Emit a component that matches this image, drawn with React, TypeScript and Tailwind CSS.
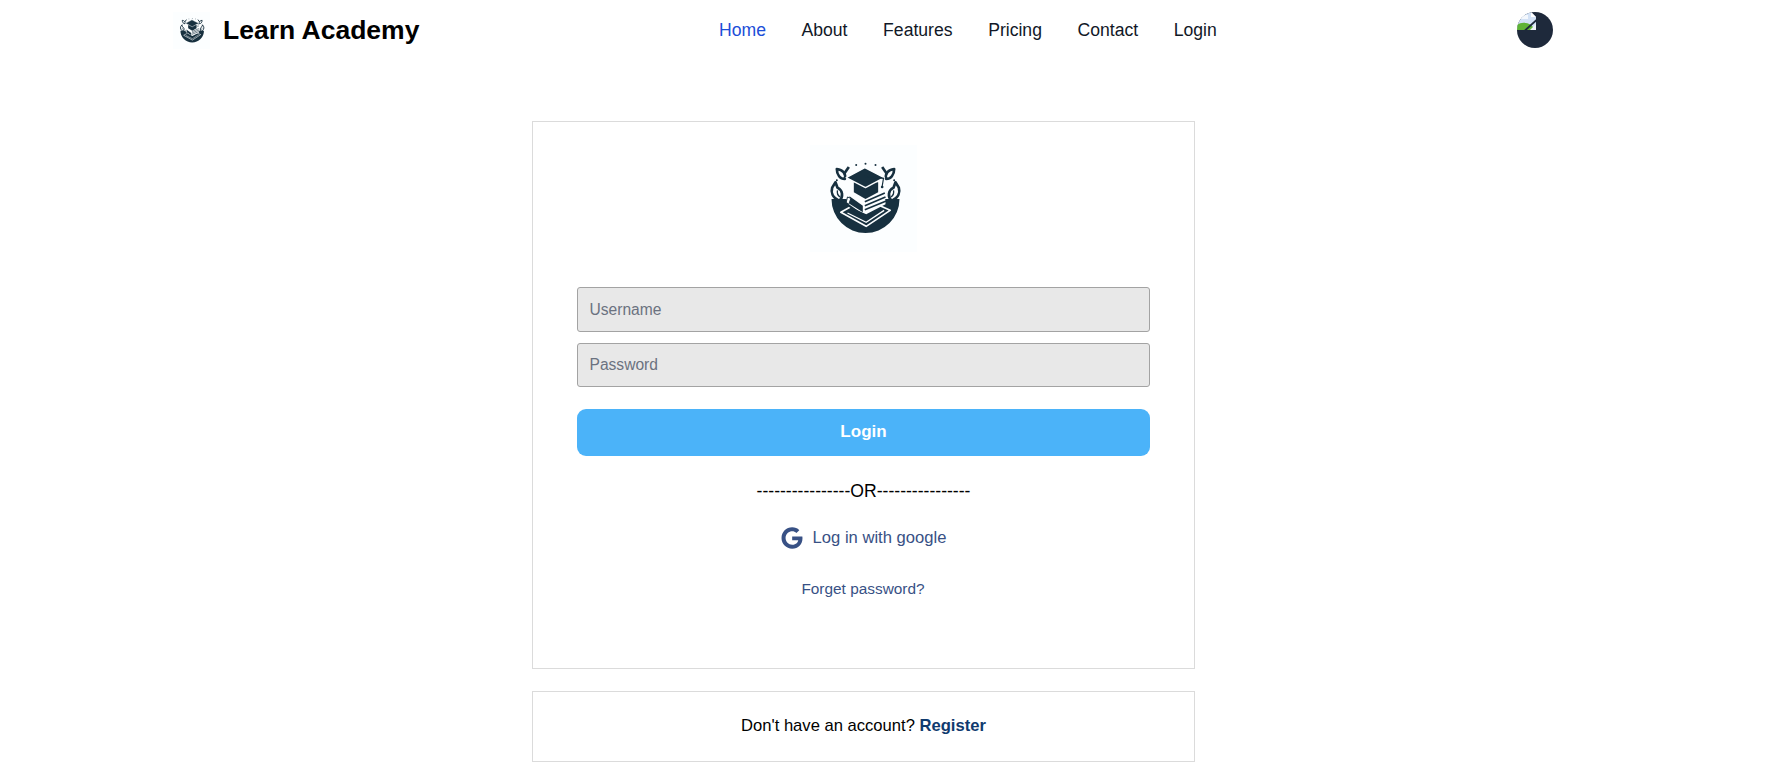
import { FaGoogle } from "react-icons/fa";

const navLinks = ["Home", "About", "Features", "Pricing", "Contact", "Login"];

function Logo({ className }: { className: string }) {
  const dark = "#17303f";
  const light = "#fcfeff";
  const leaves = (
    <g fill="none" stroke={dark} strokeWidth="8" strokeLinejoin="round">
      <path d="M20 92 C16 105 20 122 42 132 C54 118 52 100 36 92 L30 76 Z" />
      <path d="M36 100 C34 108 38 116 44 120" strokeWidth="4" />
      <path d="M34 36 C52 38 62 50 58 66 C44 66 34 54 34 36 Z" />
      <path d="M56 50 L70 30" />
    </g>
  );
  return (
    <svg viewBox="0 0 107 107" className={className}>
      <rect width="107" height="107" fill={light} />
      <g transform="translate(15.5 12) scale(0.3333)">
        {/* bowl */}
        <path d="M18 126 A102 102 0 0 0 222 126 L175 126 L120 150 L65 126 Z" fill={dark} />
        {leaves}
        <g transform="translate(240 0) scale(-1 1)">{leaves}</g>
        {/* dots */}
        <circle cx="92" cy="24" r="3" fill={dark} />
        <circle cx="120" cy="20" r="3" fill={dark} />
        <circle cx="150" cy="24" r="3" fill={dark} />
        <circle cx="34" cy="70" r="3" fill={dark} />
        <circle cx="206" cy="70" r="3" fill={dark} />
        {/* open book */}
        <path d="M46 166 L118 126 L194 160 L122 208 Z" fill={dark} stroke={light} strokeWidth="5" strokeLinejoin="round" />
        <path d="M66 168 L122 196 L176 160" fill="none" stroke={light} strokeWidth="4" />
        {/* book stack */}
        <path d="M62 122 L85 100 L122 122 L160 100 L180 128 L180 142 L122 172 L70 148 Z" fill={light} />
        <path d="M118 134 L178 108 M118 146 L180 120 M118 158 L182 132" stroke={dark} strokeWidth="5" fill="none" />
        <path d="M72 118 L112 146 L112 166 L72 140 Z" fill={dark} />
        <path d="M62 140 L108 172" stroke={dark} strokeWidth="6" fill="none" />
        <path d="M66 120 L76 124 L70 142 L62 136 Z" fill={light} stroke={dark} strokeWidth="3" />
        {/* cap */}
        <path d="M85 76 L85 106 L120 126 L158 106 L158 76 Z" fill={dark} />
        <path d="M62 62 L118 32 L176 62 L120 92 Z" fill={dark} stroke={light} strokeWidth="4" strokeLinejoin="round" />
        <path d="M118 58 L174 64 L170 88" stroke={dark} strokeWidth="3.5" fill="none" />
        <circle cx="170" cy="90" r="4" fill={dark} />
      </g>
    </svg>
  );
}

// broken image placeholder, the avatar picture fails to load in the original
function Avatar() {
  return (
    <div className="w-9 h-9 rounded-full bg-[#1e293b] overflow-hidden">
      <svg viewBox="0 0 19 18" className="w-[19px] h-[18px]">
        <path d="M0 0 H14 L19 5 V18 H0 Z" fill="#d3e2f6" />
        <path d="M14 0 V5 H19 Z" fill="#ffffff" />
        <path d="M2 3 H11 V7 H2 Z" fill="#f4f8fd" />
        <path d="M0 18 V13 C4 10 9 10 14 13 L19 18 Z" fill="#5fb336" />
        <path d="M19 12 V18 H13 Z" fill="#eef2f7" />
        <path d="M8 18.5 L20 7.5" stroke="#1e293b" strokeWidth="1.8" />
      </svg>
    </div>
  );
}

export default function App() {
  return (
    <div className="min-h-screen bg-white text-black font-['Liberation_Sans',Arial,sans-serif]">
      <nav className="h-[60px] flex items-center pl-[173px] pr-[232px]">
        <div className="flex items-center w-[546px]">
          <Logo className="w-[37px] h-[37px]" />
          <span className="ml-[13px] text-[26.5px] font-bold leading-none">Learn Academy</span>
        </div>
        <ul className="flex gap-[35.6px] text-[17.6px] text-[#111827]">
          {navLinks.map((l, i) => (
            <li key={l} className={i === 0 ? "text-[#1d4ed8]" : ""}>
              {l}
            </li>
          ))}
        </ul>
        <div className="ml-auto">
          <Avatar />
        </div>
      </nav>

      <main className="flex flex-col items-center pt-[61px] pr-[59px]">
        <section className="w-[663px] h-[548px] border border-[#dbdbdb] pt-[23px] px-[44px] flex flex-col items-center">
          <Logo className="w-[107px] h-[107px]" />
          <form className="w-full mt-[35px] flex flex-col">
            <input
              placeholder="Username"
              className="h-[45px] w-full bg-[#e8e8e8] border border-[#a3a3a3] rounded-[3px] px-3 text-[15.6px] placeholder:text-[#6b7280] outline-none"
            />
            <input
              type="password"
              placeholder="Password"
              className="h-[44px] w-full mt-[11px] bg-[#e8e8e8] border border-[#a3a3a3] rounded-[3px] px-3 text-[15.6px] placeholder:text-[#6b7280] outline-none"
            />
            <button
              type="button"
              className="h-[47px] w-full mt-[22px] pb-[1px] pl-[1px] rounded-[9px] bg-[#4bb3f9] text-white font-bold text-[17px]"
            >
              Login
            </button>
          </form>
          <p className="mt-[25px] pl-[1px] text-[17.6px] leading-[21px]">----------------OR----------------</p>
          <a className="mt-[24px] pl-[1px] flex items-center gap-[10px] text-[#385185] text-[16.6px]">
            <FaGoogle className="w-[22px] h-[22px]" />
            Log in with google
          </a>
          <a className="mt-[26px] text-[#385185] text-[15.4px]">Forget password?</a>
        </section>
        <section className="w-[663px] h-[71px] mt-[22px] pl-[1px] border border-[#dbdbdb] flex items-center justify-center text-[16.6px]">
          <span>
            Don't have an account? <a className="font-bold text-[#0f3a6e]">Register</a>
          </span>
        </section>
      </main>
    </div>
  );
}
